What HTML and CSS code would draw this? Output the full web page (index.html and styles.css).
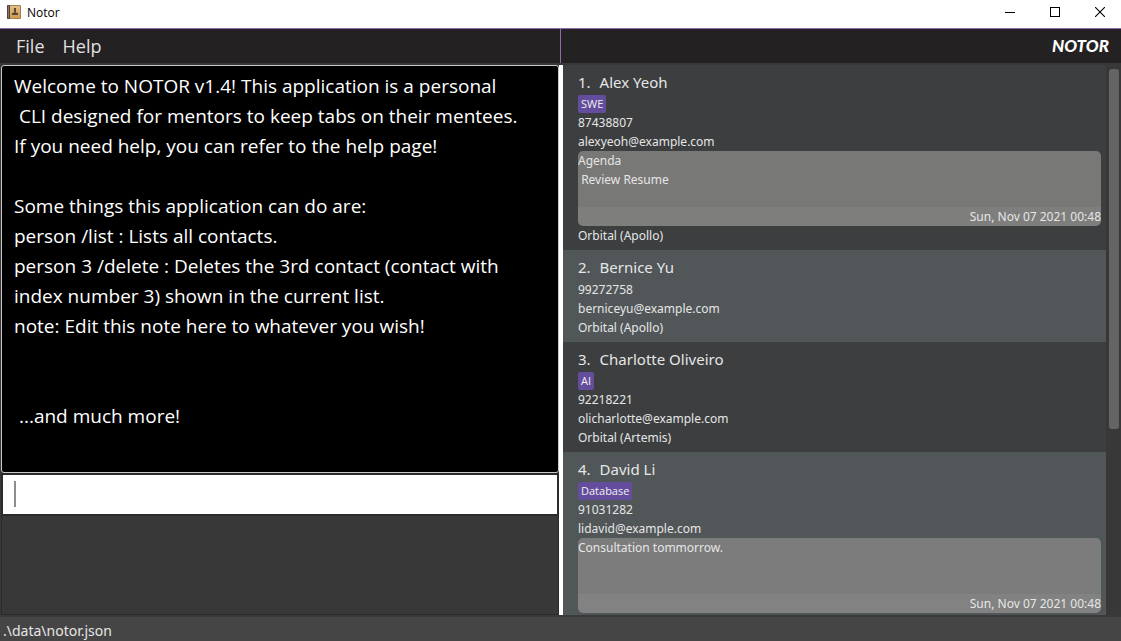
FILE: index.html
```html
<!DOCTYPE html>
<html lang="en">
<head>
<meta charset="utf-8">
<title>Notor</title>
<link rel="stylesheet" href="styles.css">
</head>
<body>
<header class="titlebar">
  <svg class="app-icon" width="14" height="14" viewBox="0 0 14 14" aria-hidden="true">
    <defs><linearGradient id="cover" x1="0" y1="0" x2="0" y2="1"><stop offset="0" stop-color="#e0bf85"/><stop offset="1" stop-color="#d09a50"/></linearGradient></defs>
    <rect width="14" height="14" rx="1" fill="#a88052"/>
    <rect width="3" height="14" rx="1" fill="#53453d"/>
    <rect x="1" y="1" width="1" height="12" fill="#85776b"/>
    <rect x="3" y="1" width="10" height="12" fill="url(#cover)"/>
    <path d="M7 3h2v3L8.700 7.500l2.300.5v2H5V8l2.300-.5L7 6z" fill="#5b4632"/>
  </svg>
  <h1 class="window-title">Notor</h1>
  <div class="window-buttons">
    <button class="window-button" aria-label="Minimize"><svg width="10" height="10" viewBox="0 0 10 10" shape-rendering="crispEdges"><path d="M0 5.5h10" stroke="#000"/></svg></button>
    <button class="window-button" aria-label="Maximize"><svg width="10" height="10" viewBox="0 0 10 10" shape-rendering="crispEdges"><path d="M.5.5h9v9h-9z" stroke="#000" fill="none"/></svg></button>
    <button class="window-button" aria-label="Close"><svg width="10" height="10" viewBox="0 0 10 10"><path d="M0 0l10 10M10 0L0 10" stroke="#000" stroke-width="1.1"/></svg></button>
  </div>
</header>
<div class="menubar">
  <nav class="menus">
    <button class="menu">File</button>
    <button class="menu">Help</button>
  </nav>
  <div class="brand">NOTOR</div>
</div>
<main class="workspace">
  <section class="terminal">
    <textarea class="output" aria-label="Result" readonly>Welcome to NOTOR v1.4! This application is a personal
 CLI designed for mentors to keep tabs on their mentees.
If you need help, you can refer to the help page!

Some things this application can do are:
person /list : Lists all contacts.
person 3 /delete : Deletes the 3rd contact (contact with
index number 3) shown in the current list.
note: Edit this note here to whatever you wish!


 ...and much more!</textarea>
    <div class="command">
      <input class="command-input" type="text" aria-label="Command">
      <span class="caret"></span>
    </div>
    <div class="filler"></div>
  </section>
  <div class="divider"></div>
  <section class="people">
    <ol class="person-list">
      <li class="person">
        <h2 class="name"><span>1.</span><span>Alex Yeoh</span></h2>
        <div class="tags"><span class="tag">SWE</span></div>
        <p>87438807</p>
        <p>alexyeoh@example.com</p>
        <div class="note">
          <div class="note-text">Agenda
 Review Resume</div>
          <div class="note-time">Sun, Nov 07 2021 00:48</div>
        </div>
        <p>Orbital (Apollo)</p>
      </li>
      <li class="person">
        <h2 class="name"><span>2.</span><span>Bernice Yu</span></h2>
        <p>99272758</p>
        <p>berniceyu@example.com</p>
        <p>Orbital (Apollo)</p>
      </li>
      <li class="person">
        <h2 class="name"><span>3.</span><span>Charlotte Oliveiro</span></h2>
        <div class="tags"><span class="tag">AI</span></div>
        <p>92218221</p>
        <p>olicharlotte@example.com</p>
        <p>Orbital (Artemis)</p>
      </li>
      <li class="person">
        <h2 class="name"><span>4.</span><span>David Li</span></h2>
        <div class="tags"><span class="tag">Database</span></div>
        <p>91031282</p>
        <p>lidavid@example.com</p>
        <div class="note">
          <div class="note-text">Consultation tommorrow.</div>
          <div class="note-time">Sun, Nov 07 2021 00:48</div>
        </div>
      </li>
    </ol>
    <div class="scrollbar"><div class="thumb"></div></div>
  </section>
</main>
<footer class="status">.\data\notor.json</footer>
</body>
</html>
```

FILE: styles.css
```css
* { box-sizing: border-box; }

body {
  margin: 0;
  height: 100vh;
  display: flex;
  flex-direction: column;
  background: #383838;
  color: #e6e6e6;
  font-family: "Noto Sans", "Open Sans", sans-serif;
  font-size: 12px;
  line-height: 19px;
  overflow: hidden;
}

h1, h2, p, ol { margin: 0; padding: 0; font-weight: 400; }

button {
  border: 0;
  padding: 0;
  background: none;
  font: inherit;
  color: inherit;
}

.titlebar {
  flex: none;
  display: flex;
  align-items: center;
  height: 28px;
  padding: 0 1px 4px 7px;
  background: #fff;
  color: #000;
}

.app-icon { flex: none; }

.window-title {
  margin-left: 6px;
  padding-top: 2px;
  font-family: "Open Sans", sans-serif;
  font-size: 12px;
  line-height: 16px;
}

.window-buttons {
  display: flex;
  gap: 5px;
  margin-left: auto;
}

.window-button {
  display: flex;
  align-items: center;
  justify-content: center;
  width: 40px;
  height: 24px;
}

.menubar {
  flex: none;
  display: flex;
  height: 35px;
  border-top: 1px solid #8f6aa8;
  background: #232122;
}

.menus {
  width: 50%;
  display: flex;
  gap: 18px;
  padding-left: 16px;
  border-right: 1px solid #8f6aa8;
}

.menu {
  font-family: "Open Sans", sans-serif;
  font-size: 18px;
  line-height: 34px;
  color: #e0e0e0;
}

.brand {
  width: 50%;
  padding-right: 12px;
  text-align: right;
  font: italic 900 17px/34px Lato, sans-serif;
  color: #fff;
}

.workspace {
  flex: 1;
  min-height: 0;
  display: flex;
  margin-top: 2px;
}

.terminal {
  flex: 1;
  min-width: 0;
  display: flex;
  flex-direction: column;
  padding-left: 1px;
}

.output {
  flex: none;
  display: block;
  width: 100%;
  height: 408px;
  padding: 5px 12px;
  border: 1px solid #c8c8c8;
  border-radius: 3px;
  outline: 0;
  resize: none;
  overflow: hidden;
  background: #000;
  color: #fff;
  font: 19px/30px "Open Sans", "Noto Sans", sans-serif;
}

.command {
  position: relative;
  flex: none;
  height: 43px;
  padding: 2px;
  background: #2b2b2b;
}

.command-input {
  display: block;
  width: 100%;
  height: 39px;
  padding: 0 12px;
  border: 0;
  outline: 0;
  background: #fff;
  font: 19px/30px "Open Sans", "Noto Sans", sans-serif;
}

.caret {
  position: absolute;
  left: 13px;
  top: 8px;
  width: 2px;
  height: 26px;
  background: #8c8c8c;
}

.filler {
  flex: 1;
  border: 1px solid #2b2b2b;
  border-top: 0;
  background: #383838;
}

.divider { flex: none; width: 4px; background: #fff; }

.people {
  flex: 1;
  min-width: 0;
  display: flex;
}

.person-list {
  flex: 1;
  overflow: hidden;
  list-style: none;
}

.person { padding: 5px 5px 5px 15px; background: #3c3e3f; }
.person:nth-child(even) { background: #515658; }

.name {
  display: flex;
  gap: 9px;
  font-size: 15px;
  line-height: 25px;
}

.tags { display: flex; height: 18px; }

.tag {
  padding: 0 3px;
  border-radius: 2px;
  background: #644d9d;
  color: #f0f0f0;
  font-family: "Open Sans", sans-serif;
  font-size: 11px;
  line-height: 18px;
}

.note {
  border-radius: 5px;
  overflow: hidden;
  background: rgba(131, 130, 129, 0.85);
}

.note-text { min-height: 56px; white-space: pre-wrap; }
.note-time { background: rgba(255, 255, 255, 0.05); text-align: right; }

.scrollbar {
  flex: none;
  width: 15px;
  padding: 4px 2px 0 3px;
  background: #383838;
}

.thumb { height: 360px; border-radius: 3px; background: #646464; }

.status {
  flex: none;
  height: 26px;
  padding: 4px 3px 0;
  border-top: 2px solid #3a3a3a;
  background: #454545;
  font-size: 14px;
  line-height: 20px;
}
```
